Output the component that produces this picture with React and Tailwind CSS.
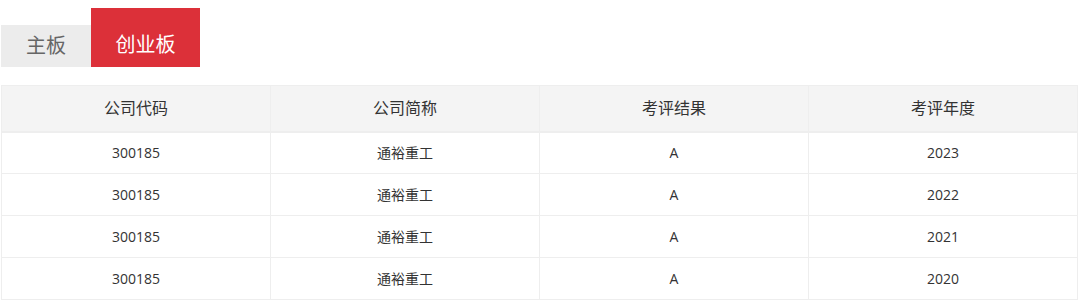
const rows = [
  { code: '300185', name: '通裕重工', result: 'A', year: '2023' },
  { code: '300185', name: '通裕重工', result: 'A', year: '2022' },
  { code: '300185', name: '通裕重工', result: 'A', year: '2021' },
  { code: '300185', name: '通裕重工', result: 'A', year: '2020' },
];

const font = { fontFamily: '"Open Sans", "Noto Sans CJK SC", sans-serif' };

export default function App() {
  return (
    <div className="bg-white w-[1080px] h-[301px] overflow-hidden pl-px pt-2" style={font}>
      {/* tabs */}
      <div className="flex items-end">
        <div className="w-[90px] h-[42px] bg-[#ececec] text-[#666] text-[20px] flex items-center justify-center">
          主板
        </div>
        <div className="w-[109px] h-[59px] bg-[#dc3039] text-white text-[20px] flex items-end justify-center pb-[7px]">
          创业板
        </div>
      </div>

      <table className="mt-[18px] w-[1077px] border-collapse text-[#333] table-fixed">
        <thead>
          <tr className="bg-[#f4f4f4] h-[46px] border-b-2 border-[#eee]">
            {['公司代码', '公司简称', '考评结果', '考评年度'].map((h) => (
              <th key={h} className="border border-[#eee] font-normal text-[16px]">{h}</th>
            ))}
          </tr>
        </thead>
        <tbody>
          {rows.map((r, i) => (
            <tr key={i} className="h-[42px] text-[14px]">
              <td className="border border-[#eee] text-center">{r.code}</td>
              <td className="border border-[#eee] text-center">{r.name}</td>
              <td className="border border-[#eee] text-center">{r.result}</td>
              <td className="border border-[#eee] text-center">{r.year}</td>
            </tr>
          ))}
        </tbody>
      </table>
    </div>
  );
}
